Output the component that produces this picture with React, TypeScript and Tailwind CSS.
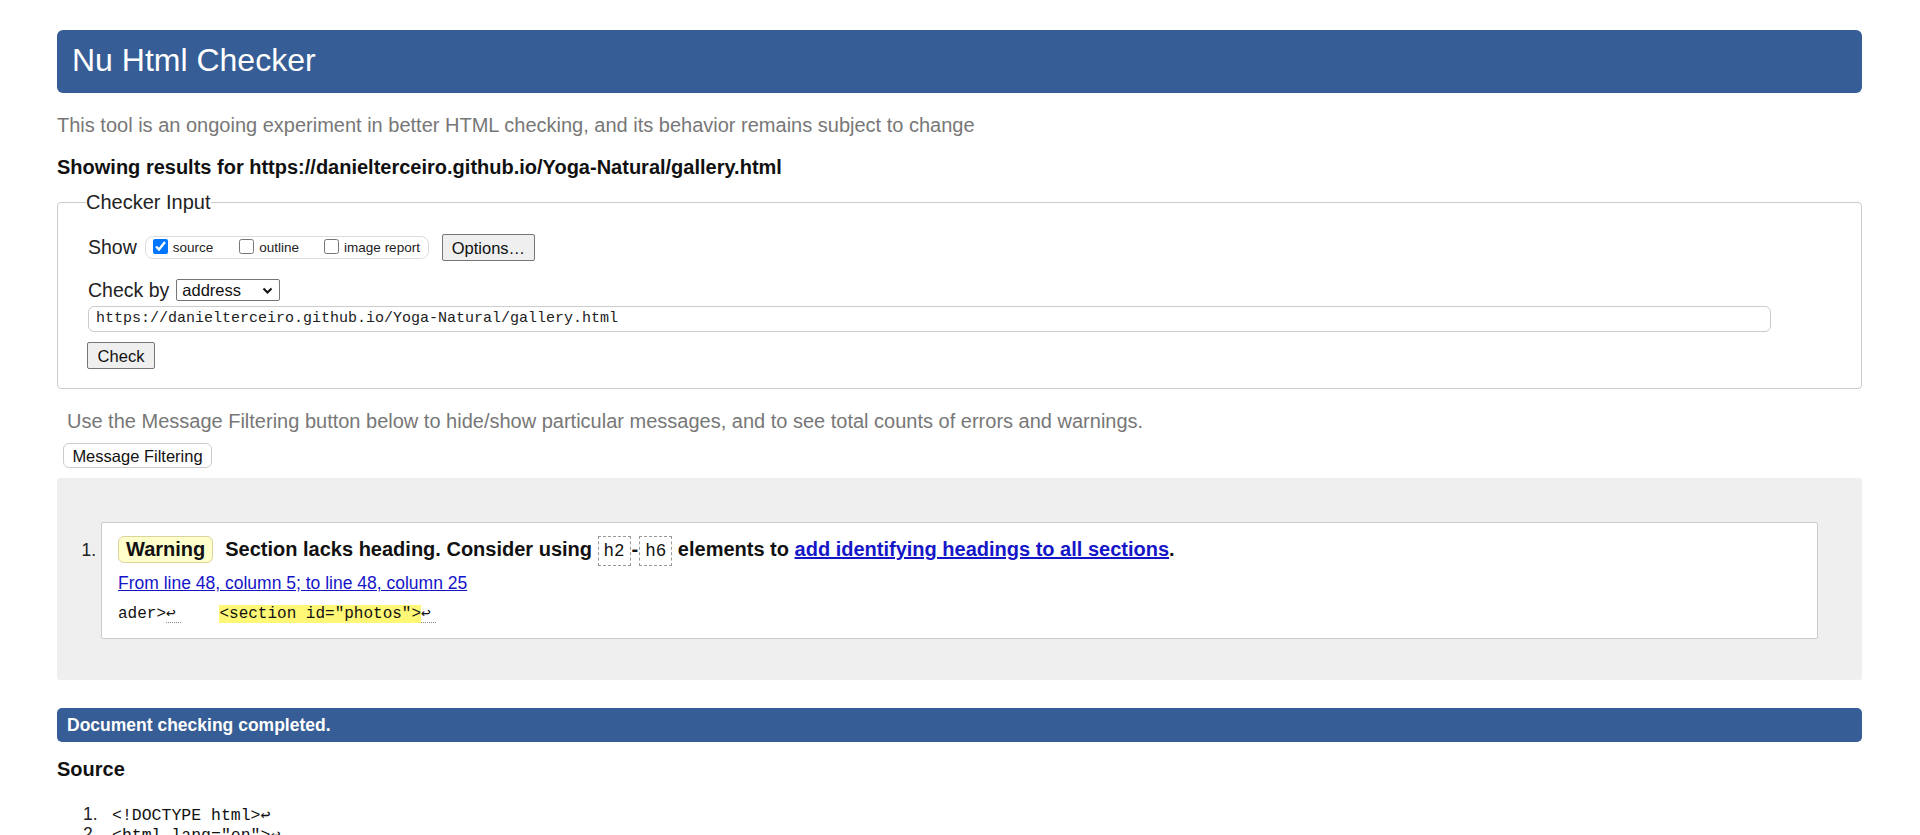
import React from "react";

const Ret = ({ w = "w-[15px]" }: { w?: string }) => (
  <span className={`inline-block ${w} border-b border-dotted border-[#888] leading-[16px]`}>↩</span>
);

export default function App() {
  const sourceLines = ["<!DOCTYPE html>", '<html lang="en">'];
  return (
    <div className="min-h-screen bg-white font-['Liberation_Sans',Arial,sans-serif] text-[#222] pl-[57px] pr-[58px] pt-[30px] pb-[40px]">
      {/* Header */}
      <div className="h-[63px] bg-[#365d95] rounded-[6px] flex items-center pl-[15px] pb-[2px]">
        <h1 className="text-[32px] leading-[37px] text-white font-normal">Nu Html Checker</h1>
      </div>

      <p className="mt-[21px] text-[20px] leading-[23px] text-[#777]">
        This tool is an ongoing experiment in better HTML checking, and its behavior remains subject to change
      </p>
      <p className="mt-[19px] text-[20px] leading-[23px] font-bold text-[#111]">
        Showing results for https://danielterceiro.github.io/Yoga-Natural/gallery.html
      </p>

      {/* Checker input */}
      <fieldset className="mt-[12px] border border-[#ccc] rounded-[4px] pl-[28px] pr-[20px] pb-[19px]">
        <legend className="text-[20px] leading-[23px] text-[#222] p-0">Checker Input</legend>
        <div className="pl-[2px]">
          <div className="mt-[20px] h-[27px] flex items-center">
            <span className="text-[19.5px] leading-[23px]">Show</span>
            <div className="ml-[8px] h-[23px] border border-[#ddd] rounded-[8px] flex items-center pl-[7px] pr-[8px] text-[13.5px]">
              <input type="checkbox" defaultChecked className="m-0 w-[15px] h-[15px] -mt-[3px]" />
              <span className="ml-[5px] mt-[2px]">source</span>
              <input type="checkbox" className="ml-[26px] m-0 w-[15px] h-[15px] -mt-[3px]" />
              <span className="ml-[5px] mt-[2px]">outline</span>
              <input type="checkbox" className="ml-[25px] m-0 w-[15px] h-[15px] -mt-[3px]" />
              <span className="ml-[5px] mt-[2px]">image report</span>
            </div>
            <button className="ml-[13px] w-[93px] h-[27px] bg-[#efefef] border border-[#767676] rounded-[2px] text-[16.5px] leading-[20px] text-[#111]">
              Options…
            </button>
          </div>

          <div className="mt-[18px] h-[22px] flex items-center">
            <span className="text-[19.5px] leading-[23px]">Check by</span>
            <div className="ml-[7px] w-[104px] h-[22px] border border-[#767676] rounded-[2px] bg-white flex items-center pl-[5px] pr-[6px] text-[16.5px] text-[#111]">
              <span className="flex-1">address</span>
              <svg width="11" height="8" viewBox="0 0 11 8" className="mt-[1px]">
                <path d="M1.5 1.5 L5.5 5.5 L9.5 1.5" fill="none" stroke="#111" strokeWidth="2" />
              </svg>
            </div>
          </div>

          <div className="mt-[5px] w-[1683px] h-[26px] border border-[#ccc] rounded-[6px] flex items-center pl-[7px] font-['Liberation_Mono','DejaVu_Sans_Mono',monospace] text-[15px] text-[#222]">
            https://danielterceiro.github.io/Yoga-Natural/gallery.html
          </div>

          <button className="mt-[10px] -ml-[1px] w-[68px] h-[27px] bg-[#efefef] border border-[#767676] rounded-[2px] text-[16.5px] leading-[20px] text-[#111] block">
            Check
          </button>
        </div>
      </fieldset>

      <p className="mt-[21px] pl-[10px] text-[20px] leading-[23px] text-[#777]">
        Use the Message Filtering button below to hide/show particular messages, and to see total counts of errors and warnings.
      </p>
      <button className="mt-[10px] ml-[6px] block w-[149px] h-[25px] bg-white border border-[#ccc] rounded-[6px] text-[16.5px] leading-[20px] text-[#111]">
        Message Filtering
      </button>

      {/* Results */}
      <div className="mt-[10px] bg-[#efefef] rounded-[3px] pt-[44px] pb-[41px] pl-[44px] pr-[44px]">
        <ol className="list-decimal">
          <li className="bg-white border border-[#ccc] rounded-[2px] pl-[16px] pt-[13px] pb-[13px] text-[17.5px] text-[#222]">
            <p className="text-[20px] leading-[24px] font-bold text-[#111]">
              <span className="inline-block h-[27px] leading-[25px] px-[7px] bg-[#ffffcc] border border-[#dcd39c] rounded-[6px]">
                Warning
              </span>
              <span className="ml-[12px]">Section lacks heading. Consider using </span>
              <code className="inline-block px-[5px] py-[4px] leading-[20px] border border-dashed border-[#999] font-normal font-['Liberation_Mono','DejaVu_Sans_Mono',monospace] text-[17.5px]">
                h2
              </code>
              <span className="mx-[1px]">-</span>
              <code className="inline-block px-[5px] py-[4px] leading-[20px] border border-dashed border-[#999] font-normal font-['Liberation_Mono','DejaVu_Sans_Mono',monospace] text-[17.5px]">
                h6
              </code>{" "}
              elements to{" "}
              <a href="#" className="text-[#1515c8] underline">
                add identifying headings to all sections
              </a>
              .
            </p>
            <p className="mt-[6px] text-[17.5px] leading-[22px]">
              <a href="#" className="text-[#1515c8] underline">
                From line 48, column 5; to line 48, column 25
              </a>
            </p>
            <p className="mt-[9px] leading-[22px] font-['Liberation_Mono','DejaVu_Sans_Mono',monospace] text-[16px] text-[#111] whitespace-pre">
              ader&gt;<Ret />{"    "}
              <span className="bg-[#fff877]">&lt;section id="photos"&gt;</span>
              <Ret />
            </p>
          </li>
        </ol>
      </div>

      <div className="mt-[28px] h-[34px] bg-[#365d95] rounded-[5px] flex items-center pl-[10px]">
        <span className="text-[17.5px] font-bold text-white">Document checking completed.</span>
      </div>

      <h2 className="mt-[16px] text-[20px] leading-[23px] font-bold text-[#111]">Source</h2>

      <ol className="mt-[24px] pl-[26px]">
        {sourceLines.map((l, i) => (
          <li key={i} className="flex items-baseline leading-[18.3px]">
            <span className="w-[29px] text-[17.5px]">{i + 1}.</span>
            <code className="whitespace-pre font-['Liberation_Mono','DejaVu_Sans_Mono',monospace] text-[16.5px] text-[#111]">
              {l}
              <span className="inline-block w-[15px]">↩</span>
            </code>
          </li>
        ))}
      </ol>
    </div>
  );
}
